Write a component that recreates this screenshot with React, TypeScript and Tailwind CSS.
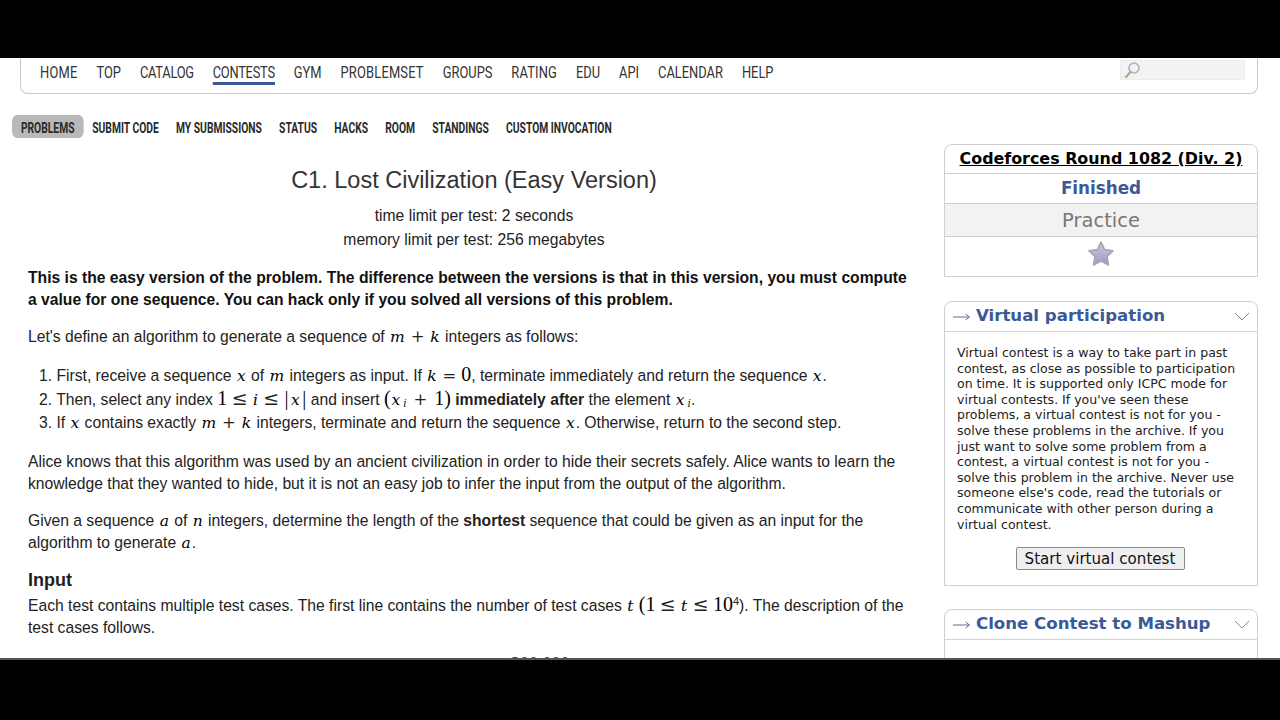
import React from "react";

const nav = [
  { label: "HOME", cls: "tracking-[0.3px]" },
  { label: "TOP", cls: "" },
  { label: "CATALOG", cls: "tracking-[-0.38px]" },
  { label: "CONTESTS", cls: "tracking-[-0.33px] h-[23px] border-b-[3px] border-[#3b5998]" },
  { label: "GYM", cls: "" },
  { label: "PROBLEMSET", cls: "tracking-[0.26px]" },
  { label: "GROUPS", cls: "" },
  { label: "RATING", cls: "tracking-[0.2px]" },
  { label: "EDU", cls: "" },
  { label: "API", cls: "" },
  { label: "CALENDAR", cls: "" },
  { label: "HELP", cls: "" },
];
const tabs = ["PROBLEMS", "SUBMIT CODE", "MY SUBMISSIONS", "STATUS", "HACKS", "ROOM", "STANDINGS", "CUSTOM INVOCATION"];

const M = ({ children }: { children: React.ReactNode }) => (
  <span className="px-[1px] font-['DejaVu_Serif',serif] text-[15.5px] italic text-black leading-none">{children}</span>
);
const N = ({ children }: { children: React.ReactNode }) => (
  <span className="font-['Liberation_Serif',serif] text-[20px] not-italic text-black leading-none">{children}</span>
);
const Op = ({ children }: { children: React.ReactNode }) => (
  <span className="mx-[0.5px] font-['DejaVu_Serif',serif] text-[16.5px] not-italic text-[#222] leading-none">{children}</span>
);
const Le = () => (
  <span className="font-['DejaVu_Serif',serif] text-[19px] not-italic text-[#222] leading-none">≤</span>
);
const Sub = ({ children }: { children: React.ReactNode }) => (
  <sub className="pl-[2px] font-['DejaVu_Serif',serif] text-[10.5px] italic leading-none">{children}</sub>
);

const Chevron = () => (
  <svg width="16" height="9" viewBox="0 0 16 9" className="text-[#8a8a8a]">
    <path d="M1 1 L8 8 L15 1" fill="none" stroke="currentColor" strokeWidth="1" />
  </svg>
);

const BoxHeader = ({ title }: { title: string }) => (
  <div className="flex h-[30px] items-center justify-between border-b border-[#d4d4d4] pl-[8px] pr-[7px]">
    <div className="flex items-center font-['DejaVu_Sans',sans-serif] text-[16.6px] font-bold text-[#3b5998] whitespace-nowrap">
      <svg width="17" height="8" viewBox="0 0 17 8" className="mr-[6px] mt-[2px] text-[#5a6f9c]">
        <path d="M0 4 H16 M12.5 1 L16.5 4 L12.5 7" fill="none" stroke="currentColor" strokeWidth="1" />
      </svg>
      {title}
    </div>
    <Chevron />
  </div>
);

export default function App() {
  return (
    <div className="flex h-[720px] w-[1280px] flex-col overflow-hidden bg-black">
      <div className="h-[58px] shrink-0 bg-black" />
      <div className="h-[600px] shrink-0 overflow-hidden bg-white font-['Liberation_Sans',sans-serif] text-[#222]">
        <div className="mx-[20px] mr-[22px] flex h-[36px] items-start justify-between rounded-b-[8px] border-x border-b border-[#c8c8c8] pl-[19px] pr-[12px]">
          <div className="flex origin-left scale-x-[0.758] gap-[25px] pt-[4px] font-['Roboto',sans-serif] text-[17px] text-[#333]">
            {nav.map((n) => (
              <div key={n.label} className={"h-[23px] leading-[20px] whitespace-nowrap " + n.cls}>
                {n.label}
              </div>
            ))}
          </div>
          <div className="mt-[2px] flex h-[20px] w-[125px] items-center border border-[#ececec] bg-[#f3f3f3] pl-[2px]">
            <svg width="18" height="18" viewBox="0 0 18 18">
              <circle cx="11" cy="7" r="5" fill="#eef3f8" stroke="#a9b4bd" strokeWidth="1.6" />
              <path d="M7.5 11 L3 16" stroke="#b3a98f" strokeWidth="2.4" strokeLinecap="round" />
            </svg>
          </div>
        </div>

        <div className="mt-[21px] flex items-start">
          <div className="w-[944px] shrink-0">
            <div className="ml-[12px] flex h-[23px] origin-left scale-x-[0.71] items-center font-['Roboto',sans-serif] text-[14.5px] font-bold text-[#2a2a2a]">
              {tabs.map((t) => (
                <div key={t} className={t === "PROBLEMS" ? "mr-[12.5px] flex h-[23px] items-center whitespace-nowrap rounded-[7px] bg-[#b9b9b9] px-[12.5px] pt-[5px]" : "mr-[24.2px] whitespace-nowrap pt-[5px]"}>
                  {t}
                </div>
              ))}
            </div>

            <div className="ml-[28px] w-[892px] text-[15.68px] leading-[22px]">
              <div className="mt-[28px] text-center text-[23.5px] leading-[28px] text-[#333]">C1. Lost Civilization (Easy Version)</div>
              <div className="mt-[10px] text-center leading-[24px]">time limit per test: 2 seconds</div>
              <div className="text-center leading-[24px]">memory limit per test: 256 megabytes</div>

              <p className="mt-[15px] font-bold text-[#111]">
                This is the easy version of the problem. The difference between the versions is that in this version, you must compute<br />
                a value for one sequence. You can hack only if you solved all versions of this problem.
              </p>
              <p className="mt-[15px]">
                Let's define an algorithm to generate a sequence of <M>m</M> <Op>+</Op> <M>k</M> integers as follows:
              </p>
              <ol className="mt-[16px] pl-[11px] leading-[23.5px]">
                <li>1. First, receive a sequence <M>x</M> of <M>m</M> integers as input. If <M>k</M> <Op>=</Op> <N>0</N>, terminate immediately and return the sequence <M>x</M>.</li>
                <li>2. Then, select any index <N>1</N> <Le /> <M>i</M> <Le /> <span className="ml-[1px]"><N>|</N></span><span className="mx-[1.5px]"><M>x</M></span><N>|</N> and insert <N>(</N><M>x</M><Sub>i</Sub> <span className="mx-[2px]"><Op>+</Op></span> <N>1)</N> <b>immediately after</b> the element <M>x</M><Sub>i</Sub>.</li>
                <li>3. If <M>x</M> contains exactly <M>m</M> <Op>+</Op> <M>k</M> integers, terminate and return the sequence <M>x</M>. Otherwise, return to the second step.</li>
              </ol>
              <p className="mt-[16px]">
                Alice knows that this algorithm was used by an ancient civilization in order to hide their secrets safely. Alice wants to learn the<br />
                knowledge that they wanted to hide, but it is not an easy job to infer the input from the output of the algorithm.
              </p>
              <p className="mt-[15px]">
                Given a sequence <M>a</M> of <M>n</M> integers, determine the length of the <b>shortest</b> sequence that could be given as an input for the<br />
                algorithm to generate <M>a</M>.
              </p>
              <div className="mt-[14px] text-[18px] font-bold leading-[24px]">Input</div>
              <p className="mt-[2px]">
                Each test contains multiple test cases. The first line contains the number of test cases <M>t</M> <N>(1</N> <Le /> <M>t</M> <Le /> <N>10</N><sup className="text-[11px] leading-none">4</sup>). The description of the<br />
                test cases follows.
              </p>
              <p className="mt-[14px] pl-[483px] font-['Liberation_Serif',serif] text-[18px]">200 000</p>
            </div>
          </div>

          <div className="mt-[29px] w-[314px] shrink-0 font-['DejaVu_Sans',sans-serif]">
            <div className="rounded-t-[8px] border border-[#cfcfcf] text-center">
              <div className="flex h-[29px] items-center justify-center border-b border-[#cfcfcf] text-[15.9px] font-bold text-black underline">Codeforces Round 1082 (Div. 2)</div>
              <div className="flex h-[30px] items-center justify-center border-b border-[#cfcfcf] text-[16.8px] font-bold text-[#3b5998]">Finished</div>
              <div className="flex h-[33px] items-center justify-center border-b border-[#cfcfcf] bg-[#f2f2f2] pt-[1px] text-[19.5px] text-[#777]">Practice</div>
              <div className="flex h-[39px] items-start justify-center pt-[3px]">
                <svg width="28" height="28" viewBox="0 0 28 28">
                  <defs>
                    <linearGradient id="s" x1="0" y1="0" x2="0" y2="1">
                      <stop offset="0" stopColor="#c8cad2" />
                      <stop offset="1" stopColor="#9a9ad0" />
                    </linearGradient>
                  </defs>
                  <path d="M14 2 L17.6 9.6 L26 10.8 L20 16.6 L21.5 25 L14 21 L6.5 25 L8 16.6 L2 10.8 L10.4 9.6 Z" fill="url(#s)" stroke="#a5a7ae" strokeWidth="1.6" strokeLinejoin="round" />
                </svg>
              </div>
            </div>

            <div className="mt-[24px] h-[285px] rounded-t-[8px] border border-[#cfcfcf]">
              <BoxHeader title="Virtual participation" />
              <div className="px-[12px] pt-[13px] text-[12.54px] leading-[15.6px] text-[#222] whitespace-nowrap">
                Virtual contest is a way to take part in past<br />
                contest, as close as possible to participation<br />
                on time. It is supported only ICPC mode for<br />
                virtual contests. If you've seen these<br />
                problems, a virtual contest is not for you -<br />
                solve these problems in the archive. If you<br />
                just want to solve some problem from a<br />
                contest, a virtual contest is not for you -<br />
                solve this problem in the archive. Never use<br />
                someone else's code, read the tutorials or<br />
                communicate with other person during a<br />
                virtual contest.
              </div>
              <div className="mt-[15px] flex justify-center pr-[2px]">
                <button className="h-[23px] w-[169px] rounded-[2px] border border-[#8a8a8a] bg-[#efefef] text-[15.1px] text-[#111]">Start virtual contest</button>
              </div>
            </div>

            <div className="mt-[23px] h-[60px] rounded-t-[8px] border border-[#cfcfcf]">
              <BoxHeader title="Clone Contest to Mashup" />
            </div>
          </div>
        </div>
      </div>
      <div className="h-[2px] shrink-0 bg-[#555]" />
    </div>
  );
}
